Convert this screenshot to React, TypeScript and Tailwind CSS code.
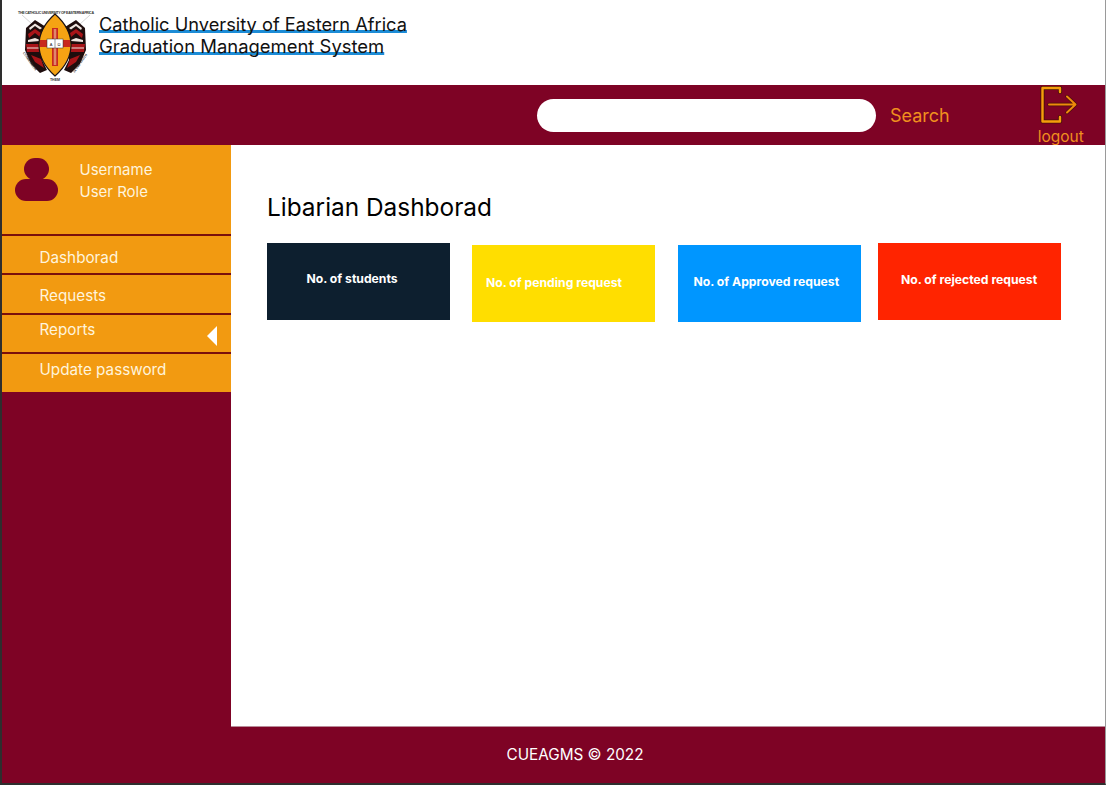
const Logo = () => (
  <svg width="80" height="74" viewBox="16 9 80 74" className="shrink-0">
    <line x1="22" y1="15" x2="32" y2="24" stroke="#aaa" strokeWidth="0.5" />
    <line x1="90" y1="15" x2="80" y2="24" stroke="#aaa" strokeWidth="0.5" />
    <text x="56" y="13.5" textAnchor="middle" fontSize="3.6" fontWeight="700" fontFamily="Liberation Sans, sans-serif" fill="#333" textLength="76">THE CATHOLIC UNIVERSITY OF EASTERN AFRICA</text>
    {/* left wing */}
    <path d="M26 28 L35 20 L46 27 L42 38 L42 60 L47 70 L40 73 L31 64 L25 50 Z" fill="#1e0d0d" />
    <path d="M29 28 L35 23.5 L42 28 L40 29.5 L35 26 L30 30 Z" fill="#efe6e0" />
    <path d="M28 34 L35 29 L41 33 L40 37 L35 33 L29 38 Z" fill="#a81418" />
    <path d="M28 40 L35 38 L40 40 L40 41 L28 42 Z" fill="#efe6e0" />
    <path d="M26 44 L40 44 L40 52 L27 52 Z" fill="#a81418" />
    <path d="M27 47.5 L40 47.5 L40 48.5 L27 48.5 Z" fill="#efe6e0" />
    <path d="M31 55 L41 59 L44 68 L35 62 Z" fill="#a81418" />
    {/* right wing */}
    <path d="M85 28 L76 20 L65 27 L69 38 L69 60 L64 70 L71 73 L80 64 L86 50 Z" fill="#1e0d0d" />
    <path d="M82 28 L76 23.5 L69 28 L71 29.5 L76 26 L81 30 Z" fill="#efe6e0" />
    <path d="M83 34 L76 29 L70 33 L71 37 L76 33 L82 38 Z" fill="#a81418" />
    <path d="M83 40 L76 38 L71 40 L71 41 L83 42 Z" fill="#efe6e0" />
    <path d="M71 44 L85 44 L84 52 L71 52 Z" fill="#a81418" />
    <path d="M71 47.5 L84 47.5 L84 48.5 L71 48.5 Z" fill="#efe6e0" />
    <path d="M80 55 L70 59 L67 68 L76 62 Z" fill="#a81418" />
    {/* shield */}
    <path d="M55 14 C64 22 71 33 71 45 C71 57 64 68 55 76 C46 68 39 57 39 45 C39 33 46 22 55 14 Z" fill="#f5a313" stroke="#1a1010" strokeWidth="1.2" />
    <rect x="52" y="28" width="6" height="38" fill="#c8281e" />
    <rect x="40" y="40" width="30" height="7" fill="#c8281e" />
    <rect x="53.7" y="29" width="2.6" height="36" fill="#f0c8a0" opacity="0.6" />
    <rect x="47" y="39" width="16" height="9" fill="#fff" stroke="#333" strokeWidth="0.5" />
    <line x1="55" y1="39" x2="55" y2="48" stroke="#333" strokeWidth="0.5" />
    <text x="51" y="45.5" textAnchor="middle" fontSize="4" fontFamily="Liberation Sans, sans-serif" fill="#222">A</text>
    <text x="59" y="45.5" textAnchor="middle" fontSize="4" fontFamily="Liberation Sans, sans-serif" fill="#222">Ω</text>
    <text x="29" y="62" fontSize="3.4" fontWeight="700" fontFamily="Liberation Sans, sans-serif" fill="#333" transform="rotate(55 29 62)" textAnchor="middle">COMMUNION</text>
    <text x="81" y="64" fontSize="3.2" fontWeight="700" fontFamily="Liberation Sans, sans-serif" fill="#333" transform="rotate(-55 81 64)" textAnchor="middle">IN THE TRUTH</text>
    <text x="55" y="81" textAnchor="middle" fontSize="3.6" fontWeight="700" fontFamily="Liberation Sans, sans-serif" fill="#333">THEM</text>
  </svg>
);

const LogoutIcon = () => (
  <svg width="38" height="38" viewBox="0 0 38 38" className="block">
    <g fill="none" strokeLinejoin="round" strokeLinecap="round">
      <path d="M20 2 H2.5 V35.5 H20 M20 2 V6 M20 35.5 V31" stroke="#4a1008" strokeWidth="4.2" />
      <path d="M20 2 H2.5 V35.5 H20 M20 2 V6 M20 35.5 V31" stroke="#f59e0b" strokeWidth="2.4" />
      <path d="M9 18.5 H35 M27 10.5 L35.5 18.5 L27 26.5" stroke="#4a1008" strokeWidth="3.4" />
      <path d="M9 18.5 H35 M27 10.5 L35.5 18.5 L27 26.5" stroke="#ee8a0c" strokeWidth="2" />
    </g>
  </svg>
);

const nav = [
  { label: "Dashborad", cls: "h-[39px] pt-[10.5px]" },
  { label: "Requests", cls: "h-[40px] pt-[10px]" },
  { label: "Reports", cls: "h-[39px] pt-[4px]" },
  { label: "Update password", cls: "h-[40px] pt-[5px]" },
];

const cards = [
  { label: "No. of students", cls: "bg-[#0d1f2f] mt-[20px] ml-[36px] pt-[28px] pl-[39.5px]" },
  { label: "No. of pending request", cls: "bg-[#ffde00] mt-[22px] ml-[22px] pt-[30px] pl-[14px]" },
  { label: "No. of Approved request", cls: "bg-[#0096ff] mt-[22px] ml-[23px] pt-[29px] pl-[15.5px]" },
  { label: "No. of rejected request", cls: "bg-[#ff2400] mt-[20px] ml-[17px] pt-[29px] pl-[23px]" },
];

export default function App() {
  return (
    <div
      className="w-[1106px] h-[785px] flex flex-col overflow-hidden bg-white border-l-2 border-b-2 border-r border-l-[#2e2e2e] border-b-[#2e2e2e] border-r-[#9a9a9a]"
      style={{ fontFamily: "Inter, 'Liberation Sans', sans-serif" }}
    >
      <header className="h-[85px] shrink-0 flex items-start bg-white pl-[14px] pt-[9px]">
        <Logo />
        <div className="ml-[3px] mt-[4px] leading-[22px] text-[#111]">
          <div className="text-[18.25px] underline decoration-[#1c8cd6] decoration-[2.5px] underline-offset-[-1px]" style={{ textDecorationSkipInk: "none" }}>Catholic Unversity of Eastern Africa</div>
          <div className="text-[18.45px] underline decoration-[#1c8cd6] decoration-[2.5px] underline-offset-[-1px]" style={{ textDecorationSkipInk: "none" }}>Graduation Management System</div>
        </div>
      </header>

      <div className="h-[60px] shrink-0 bg-[#7e0325] flex items-start">
        <div className="ml-[535px] mt-[14px] w-[339px] h-[33px] rounded-full bg-white" />
        <span className="ml-[14px] mt-[18px] text-[18px] leading-[26px] text-[#f0901e]">Search</span>
        <div className="ml-[85px] w-[48px] flex flex-col items-center">
          <div className="pt-[1px] h-[39px]"><LogoutIcon /></div>
          <span className="ml-[4px] mt-[4px] text-[15.5px] leading-[18px] text-[#f0901e]">logout</span>
        </div>
      </div>

      <div className="flex-1 min-h-0 flex">
        <aside className="w-[229px] shrink-0 bg-[#7e0325]">
          <div className="h-[89px] bg-[#f29a11] flex items-start">
            <div className="ml-[13px] mt-[13px] w-[43px] flex flex-col items-center">
              <div className="w-[25px] h-[22px] rounded-full bg-[#7e0325]" />
              <div className="w-[43px] h-[22px] -mt-[1px] rounded-full bg-[#7e0325]" />
            </div>
            <div className="ml-[21.5px] mt-[14px] text-[15px] leading-[22px] text-[#fff4dc]">
              <div>Username</div>
              <div>User Role</div>
            </div>
          </div>
          {nav.map((n) => (
            <div key={n.label} className={`${n.cls} relative border-t-2 border-[#7a0f0c] bg-[#f29a11] pl-[37.5px] text-[15.25px] leading-[22px] text-[#fff4dc]`}>
              <span>{n.label}</span>
              {n.label === "Reports" && (
                <span className="absolute right-[14px] top-[11px] w-0 h-0 border-y-[10px] border-y-transparent border-r-[10px] border-r-white" />
              )}
            </div>
          ))}
        </aside>

        <main className="flex-1 min-w-0 bg-white border-b border-[#b98b98]">
          <h1 className="ml-[36px] mt-[46px] h-[32px] text-[24.4px] leading-[32px] font-normal text-black">Libarian Dashborad</h1>
          <div className="flex items-start">
            {cards.map((c) => (
              <div key={c.label} className={`${c.cls} w-[183px] h-[77px] text-[12.2px] leading-[16px] font-bold text-white`}>
                {c.label}
              </div>
            ))}
          </div>
        </main>
      </div>

      <footer className="h-[56px] shrink-0 bg-[#7e0325] flex items-center justify-center pl-[43px] text-[15.3px] text-white">
        CUEAGMS © 2022
      </footer>
    </div>
  );
}
